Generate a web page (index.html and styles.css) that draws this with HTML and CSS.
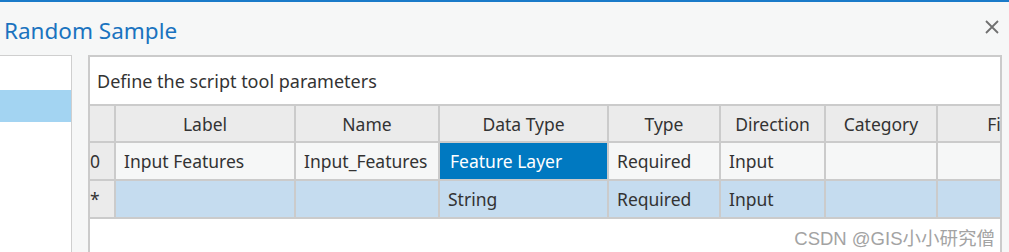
FILE: index.html
```html
<!DOCTYPE html>
<html lang="en">
<head>
    <meta charset="UTF-8">
    <title>Random Sample</title>
    <link rel="stylesheet" href="styles.css">
</head>
<body>
    <div id="dialog">
        <div class="title-bar">
            <h1>Random Sample</h1>
            <svg class="close" width="14" height="14" viewBox="0 0 14 14">
                <path d="M1 1 L13 13 M13 1 L1 13" stroke="#707070" stroke-width="1.8"/>
            </svg>
        </div>
        <div class="content">
            <div class="side-panel">
                <div class="side-item"></div>
                <div class="side-item selected"></div>
            </div>
            <div class="main-panel">
                <div class="panel-header">Define the script tool parameters</div>
                <div class="param-grid">
                    <div class="cell head"></div>
                    <div class="cell head">Label</div>
                    <div class="cell head">Name</div>
                    <div class="cell head">Data Type</div>
                    <div class="cell head">Type</div>
                    <div class="cell head">Direction</div>
                    <div class="cell head">Category</div>
                    <div class="cell head">Filter</div>

                    <div class="cell row-head">0</div>
                    <div class="cell">Input Features</div>
                    <div class="cell">Input_Features</div>
                    <div class="cell active">Feature Layer</div>
                    <div class="cell">Required</div>
                    <div class="cell">Input</div>
                    <div class="cell"></div>
                    <div class="cell"></div>

                    <div class="cell row-head">*</div>
                    <div class="cell new"></div>
                    <div class="cell new"></div>
                    <div class="cell new">String</div>
                    <div class="cell new">Required</div>
                    <div class="cell new">Input</div>
                    <div class="cell new"></div>
                    <div class="cell new"></div>
                </div>
            </div>
        </div>
        <div class="watermark">CSDN @GIS小小研究僧</div>
    </div>
</body>
</html>
```

FILE: styles.css
```css
body {
    margin: 0;
    background-color: #f6f7f7;
    font-family: "Noto Sans", "Open Sans", sans-serif;
    color: #333;
    overflow: hidden;
}
#dialog {
    position: relative;
    height: 252px;
    border-top: 2px solid #1a7bc9;
    box-sizing: border-box;
}
.title-bar {
    display: flex;
    justify-content: space-between;
    align-items: center;
    height: 53px;
    padding: 0 10px 0 4px;
}
.title-bar h1 {
    margin: 3px 0 0 0;
    font-size: 22.5px;
    font-weight: normal;
    color: #1a73bf;
}
.close {
    margin-bottom: 4px;
}
.content {
    display: flex;
    gap: 16px;
    height: 200px;
}
.side-panel {
    width: 72px;
    background-color: #fff;
    border-top: 1px solid #cfcfcf;
    border-right: 1px solid #cfcfcf;
    box-sizing: border-box;
}
.side-item {
    height: 34px;
}
.side-item.selected {
    height: 32px;
    background-color: #a3d4f2;
}
.main-panel {
    width: 914px;
    background-color: #fff;
    border: 2px solid #cbcbcb;
    border-bottom: none;
    box-sizing: border-box;
    overflow: hidden;
}
.panel-header {
    height: 47px;
    line-height: 49px;
    padding-left: 7px;
    font-size: 18px;
    border-bottom: 2px solid #cbcbcb;
}
.param-grid {
    display: grid;
    grid-template-columns: 24px 178px 142px 167px 110px 103px 110px 140px;
    grid-template-rows: 35px 36px 36px;
    gap: 2px;
    width: 990px;
    background-color: #cbcbcb;
    padding-bottom: 2px;
}
.cell {
    background-color: #f6f7f7;
    font-size: 17.5px;
    line-height: 37px;
    padding-left: 8px;
    white-space: nowrap;
    overflow: hidden;
}
.cell.head {
    background-color: #ebebeb;
    text-align: center;
    padding-left: 0;
    line-height: 36px;
}
.cell.row-head {
    background-color: #ebebeb;
    padding-left: 0;
}
.cell.active {
    background-color: #0079c1;
    color: #fff;
    padding-left: 10px;
}
.cell.new {
    background-color: #c5dcef;
}
.watermark {
    position: absolute;
    right: 14px;
    bottom: 2px;
    font-family: "Liberation Sans", "Noto Sans CJK SC", sans-serif;
    font-size: 18.5px;
    color: #a3a3a3;
    text-shadow: 0 0 1px #fff;
}
```
